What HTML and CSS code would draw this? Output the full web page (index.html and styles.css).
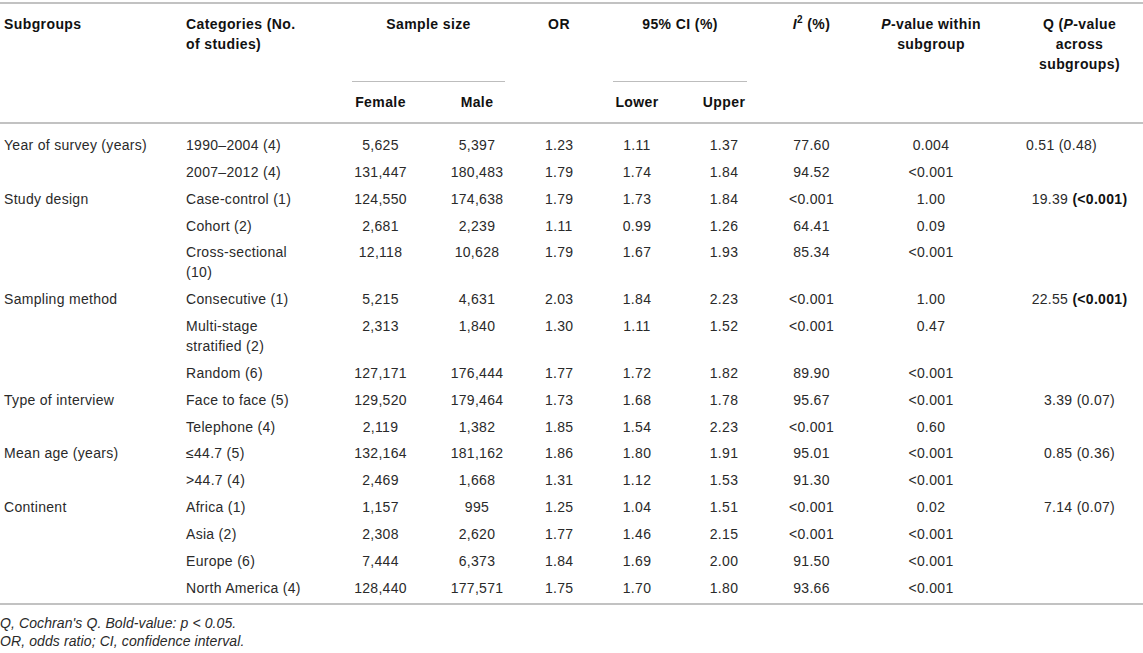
FILE: index.html
```html
<!DOCTYPE html>
<html lang="en">
<head>
<meta charset="utf-8">
<title>Subgroup analysis</title>
<link rel="stylesheet" href="styles.css">
</head>
<body>
<table class="tbl">
  <colgroup>
    <col class="c-sub">
    <col class="c-cat">
    <col class="c-fem">
    <col class="c-male">
    <col class="c-or">
    <col class="c-low">
    <col class="c-up">
    <col class="c-i2">
    <col class="c-p">
    <col class="c-q">
  </colgroup>
  <thead>
    <tr class="h-top">
      <th rowspan="2" class="left first">Subgroups</th>
      <th rowspan="2" class="left">Categories (No. of studies)</th>
      <th colspan="2" class="grp"><div class="grp-label">Sample size</div></th>
      <th rowspan="2">OR</th>
      <th colspan="2" class="grp"><div class="grp-label">95% CI (%)</div></th>
      <th rowspan="2"><i>I</i><sup>2</sup> (%)</th>
      <th rowspan="2"><i>P</i>-value within subgroup</th>
      <th rowspan="2" class="last">Q (<i>P</i>-value across subgroups)</th>
    </tr>
    <tr class="h-sub">
      <th>Female</th>
      <th>Male</th>
      <th>Lower</th>
      <th>Upper</th>
    </tr>
  </thead>
  <tbody>
    <tr class="r-first">
      <td class="left first">Year of survey (years)</td><td class="left">1990–2004 (4)</td>
      <td>5,625</td><td>5,397</td><td>1.23</td><td>1.11</td><td>1.37</td><td>77.60</td><td>0.004</td><td class="last q-offset">0.51 (0.48)</td>
    </tr>
    <tr>
      <td class="left first"></td><td class="left">2007–2012 (4)</td>
      <td>131,447</td><td>180,483</td><td>1.79</td><td>1.74</td><td>1.84</td><td>94.52</td><td>&lt;0.001</td><td class="last"></td>
    </tr>
    <tr>
      <td class="left first">Study design</td><td class="left">Case-control (1)</td>
      <td>124,550</td><td>174,638</td><td>1.79</td><td>1.73</td><td>1.84</td><td>&lt;0.001</td><td>1.00</td><td class="last">19.39 <b>(&lt;0.001)</b></td>
    </tr>
    <tr>
      <td class="left first"></td><td class="left">Cohort (2)</td>
      <td>2,681</td><td>2,239</td><td>1.11</td><td>0.99</td><td>1.26</td><td>64.41</td><td>0.09</td><td class="last"></td>
    </tr>
    <tr>
      <td class="left first"></td><td class="left">Cross-sectional (10)</td>
      <td>12,118</td><td>10,628</td><td>1.79</td><td>1.67</td><td>1.93</td><td>85.34</td><td>&lt;0.001</td><td class="last"></td>
    </tr>
    <tr>
      <td class="left first">Sampling method</td><td class="left">Consecutive (1)</td>
      <td>5,215</td><td>4,631</td><td>2.03</td><td>1.84</td><td>2.23</td><td>&lt;0.001</td><td>1.00</td><td class="last">22.55 <b>(&lt;0.001)</b></td>
    </tr>
    <tr>
      <td class="left first"></td><td class="left">Multi-stage stratified (2)</td>
      <td>2,313</td><td>1,840</td><td>1.30</td><td>1.11</td><td>1.52</td><td>&lt;0.001</td><td>0.47</td><td class="last"></td>
    </tr>
    <tr>
      <td class="left first"></td><td class="left">Random (6)</td>
      <td>127,171</td><td>176,444</td><td>1.77</td><td>1.72</td><td>1.82</td><td>89.90</td><td>&lt;0.001</td><td class="last"></td>
    </tr>
    <tr>
      <td class="left first">Type of interview</td><td class="left">Face to face (5)</td>
      <td>129,520</td><td>179,464</td><td>1.73</td><td>1.68</td><td>1.78</td><td>95.67</td><td>&lt;0.001</td><td class="last">3.39 (0.07)</td>
    </tr>
    <tr>
      <td class="left first"></td><td class="left">Telephone (4)</td>
      <td>2,119</td><td>1,382</td><td>1.85</td><td>1.54</td><td>2.23</td><td>&lt;0.001</td><td>0.60</td><td class="last"></td>
    </tr>
    <tr>
      <td class="left first">Mean age (years)</td><td class="left">≤44.7 (5)</td>
      <td>132,164</td><td>181,162</td><td>1.86</td><td>1.80</td><td>1.91</td><td>95.01</td><td>&lt;0.001</td><td class="last">0.85 (0.36)</td>
    </tr>
    <tr>
      <td class="left first"></td><td class="left">&gt;44.7 (4)</td>
      <td>2,469</td><td>1,668</td><td>1.31</td><td>1.12</td><td>1.53</td><td>91.30</td><td>&lt;0.001</td><td class="last"></td>
    </tr>
    <tr>
      <td class="left first">Continent</td><td class="left">Africa (1)</td>
      <td>1,157</td><td>995</td><td>1.25</td><td>1.04</td><td>1.51</td><td>&lt;0.001</td><td>0.02</td><td class="last">7.14 (0.07)</td>
    </tr>
    <tr>
      <td class="left first"></td><td class="left">Asia (2)</td>
      <td>2,308</td><td>2,620</td><td>1.77</td><td>1.46</td><td>2.15</td><td>&lt;0.001</td><td>&lt;0.001</td><td class="last"></td>
    </tr>
    <tr>
      <td class="left first"></td><td class="left">Europe (6)</td>
      <td>7,444</td><td>6,373</td><td>1.84</td><td>1.69</td><td>2.00</td><td>91.50</td><td>&lt;0.001</td><td class="last"></td>
    </tr>
    <tr class="r-last">
      <td class="left first"></td><td class="left">North America (4)</td>
      <td>128,440</td><td>177,571</td><td>1.75</td><td>1.70</td><td>1.80</td><td>93.66</td><td>&lt;0.001</td><td class="last"></td>
    </tr>
  </tbody>
</table>
<div class="notes">
  <p class="note">Q, Cochran's Q. Bold-value: p &lt; 0.05.</p>
  <p class="note">OR, odds ratio; CI, confidence interval.</p>
</div>
</body>
</html>
```
FILE: styles.css
```css
html, body {
  margin: 0;
  padding: 0;
  background: #ffffff;
}

body {
  font-family: "Liberation Sans", Arial, "Helvetica Neue", sans-serif;
  color: #2a2a2a;
}

.tbl {
  width: 1143px;
  table-layout: fixed;
  border-collapse: collapse;
  margin-top: 2px;
  font-size: 14px;
  line-height: 20px;
  letter-spacing: 0.3px;
  border-top: 2px solid #c2c2c2;
  border-bottom: 2px solid #c2c2c2;
}

.c-sub { width: 166px; }
.c-cat { width: 166px; }
.c-fem { width: 97px; }
.c-male { width: 96px; }
.c-or { width: 68px; }
.c-low { width: 88px; }
.c-up { width: 86px; }
.c-i2 { width: 89px; }
.c-p { width: 150px; }
.c-q { width: 137px; }

.tbl thead {
  border-bottom: 2px solid #c2c2c2;
}

.tbl th {
  font-weight: bold;
  color: #111111;
  vertical-align: top;
  text-align: center;
  padding: 10px 20px 0;
  letter-spacing: 0.4px;
}

.tbl th sup {
  font-size: 10px;
  line-height: 0;
  vertical-align: 6px;
}

.tbl .grp {
  padding: 0 20px;
}

.grp-label {
  box-sizing: border-box;
  height: 78px;
  padding-top: 10px;
  border-bottom: 1px solid #bdbdbd;
}

.tbl .h-sub th {
  padding: 10px 20px 10px;
}

.tbl td {
  text-align: center;
  vertical-align: top;
  padding: 3.5px 20px 3.35px;
  color: #2a2a2a;
}

.tbl td b {
  color: #111111;
}

.tbl .left {
  text-align: left;
}

.tbl .first {
  padding-left: 4px;
  padding-right: 10px;
}

.tbl .last {
  padding-right: 10px;
}

.tbl .q-offset {
  padding-right: 46px;
  white-space: nowrap;
}

.tbl .r-first td {
  padding-top: 11px;
}

.tbl .r-last td {
  padding-bottom: 5px;
}

.notes {
  padding-top: 9px;
}

.note {
  margin: 0;
  font-size: 14px;
  line-height: 18px;
  font-style: italic;
  color: #2a2a2a;
  letter-spacing: 0.1px;
}
```
